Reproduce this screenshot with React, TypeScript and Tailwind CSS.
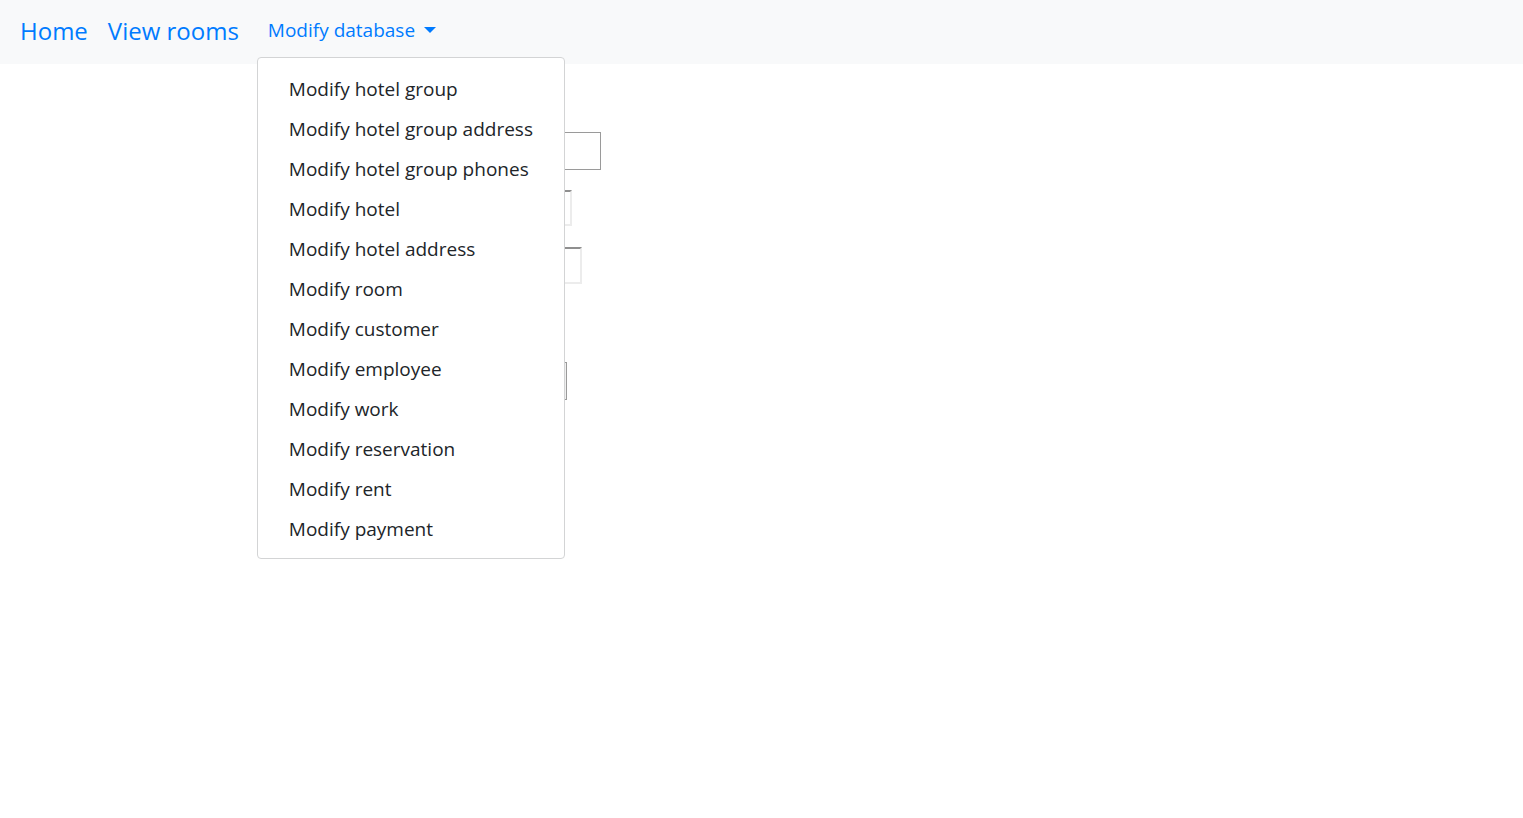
const items = [
  "Modify hotel group",
  "Modify hotel group address",
  "Modify hotel group phones",
  "Modify hotel",
  "Modify hotel address",
  "Modify room",
  "Modify customer",
  "Modify employee",
  "Modify work",
  "Modify reservation",
  "Modify rent",
  "Modify payment",
];

const App = () => {
  return (
    <div className="min-h-screen bg-white font-['Open_Sans',sans-serif]">
      {/* Navbar */}
      <nav className="h-16 bg-[#f8f9fa] flex items-center pl-5">
        <a className="text-[24px] text-[#007bff] leading-none -mt-0.5">Home</a>
        <a className="ml-5 text-[24px] text-[#007bff] leading-none -mt-0.5">View rooms</a>
        <div className="relative ml-[29px] self-stretch flex items-center">
          <button className="flex items-center gap-[9px] text-[19px] text-[#007bff] -mt-1">
            Modify database
            <span className="w-0 h-0 border-t-[6px] border-t-[#007bff] border-x-[6px] border-x-transparent" />
          </button>

          {/* Dropdown menu */}
          <div className="absolute top-[57px] -left-[11px] z-10 w-[308px] bg-white border border-[#d3d4d5] rounded pt-[11px] pb-[9px]">
            {items.map((item) => (
              <a key={item} className="block h-10 leading-10 pl-[31px] text-[19px] text-[#212529] whitespace-nowrap">
                {item}
              </a>
            ))}
          </div>
        </div>
      </nav>

      {/* Form underneath the menu */}
      <div className="pl-[300px] pt-[68px] flex flex-col items-start">
        <input className="w-[301px] h-[38px] border border-[#9a9a9a]" />
        <div className="mt-5 w-[272px] h-9 border-2 border-t-[#8f8f8f] border-l-[#8f8f8f] border-r-[#ececec] border-b-[#ececec] bg-white" />
        <textarea className="mt-[21px] w-[282px] h-[37px] border-2 border-t-[#8f8f8f] border-l-[#8f8f8f] border-r-[#ececec] border-b-[#ececec] resize-none" />
        <button className="mt-[78px] w-[267px] h-[38px] border border-[#9a9a9a] bg-[#efefef]" />
      </div>
    </div>
  );
};

export default App;
